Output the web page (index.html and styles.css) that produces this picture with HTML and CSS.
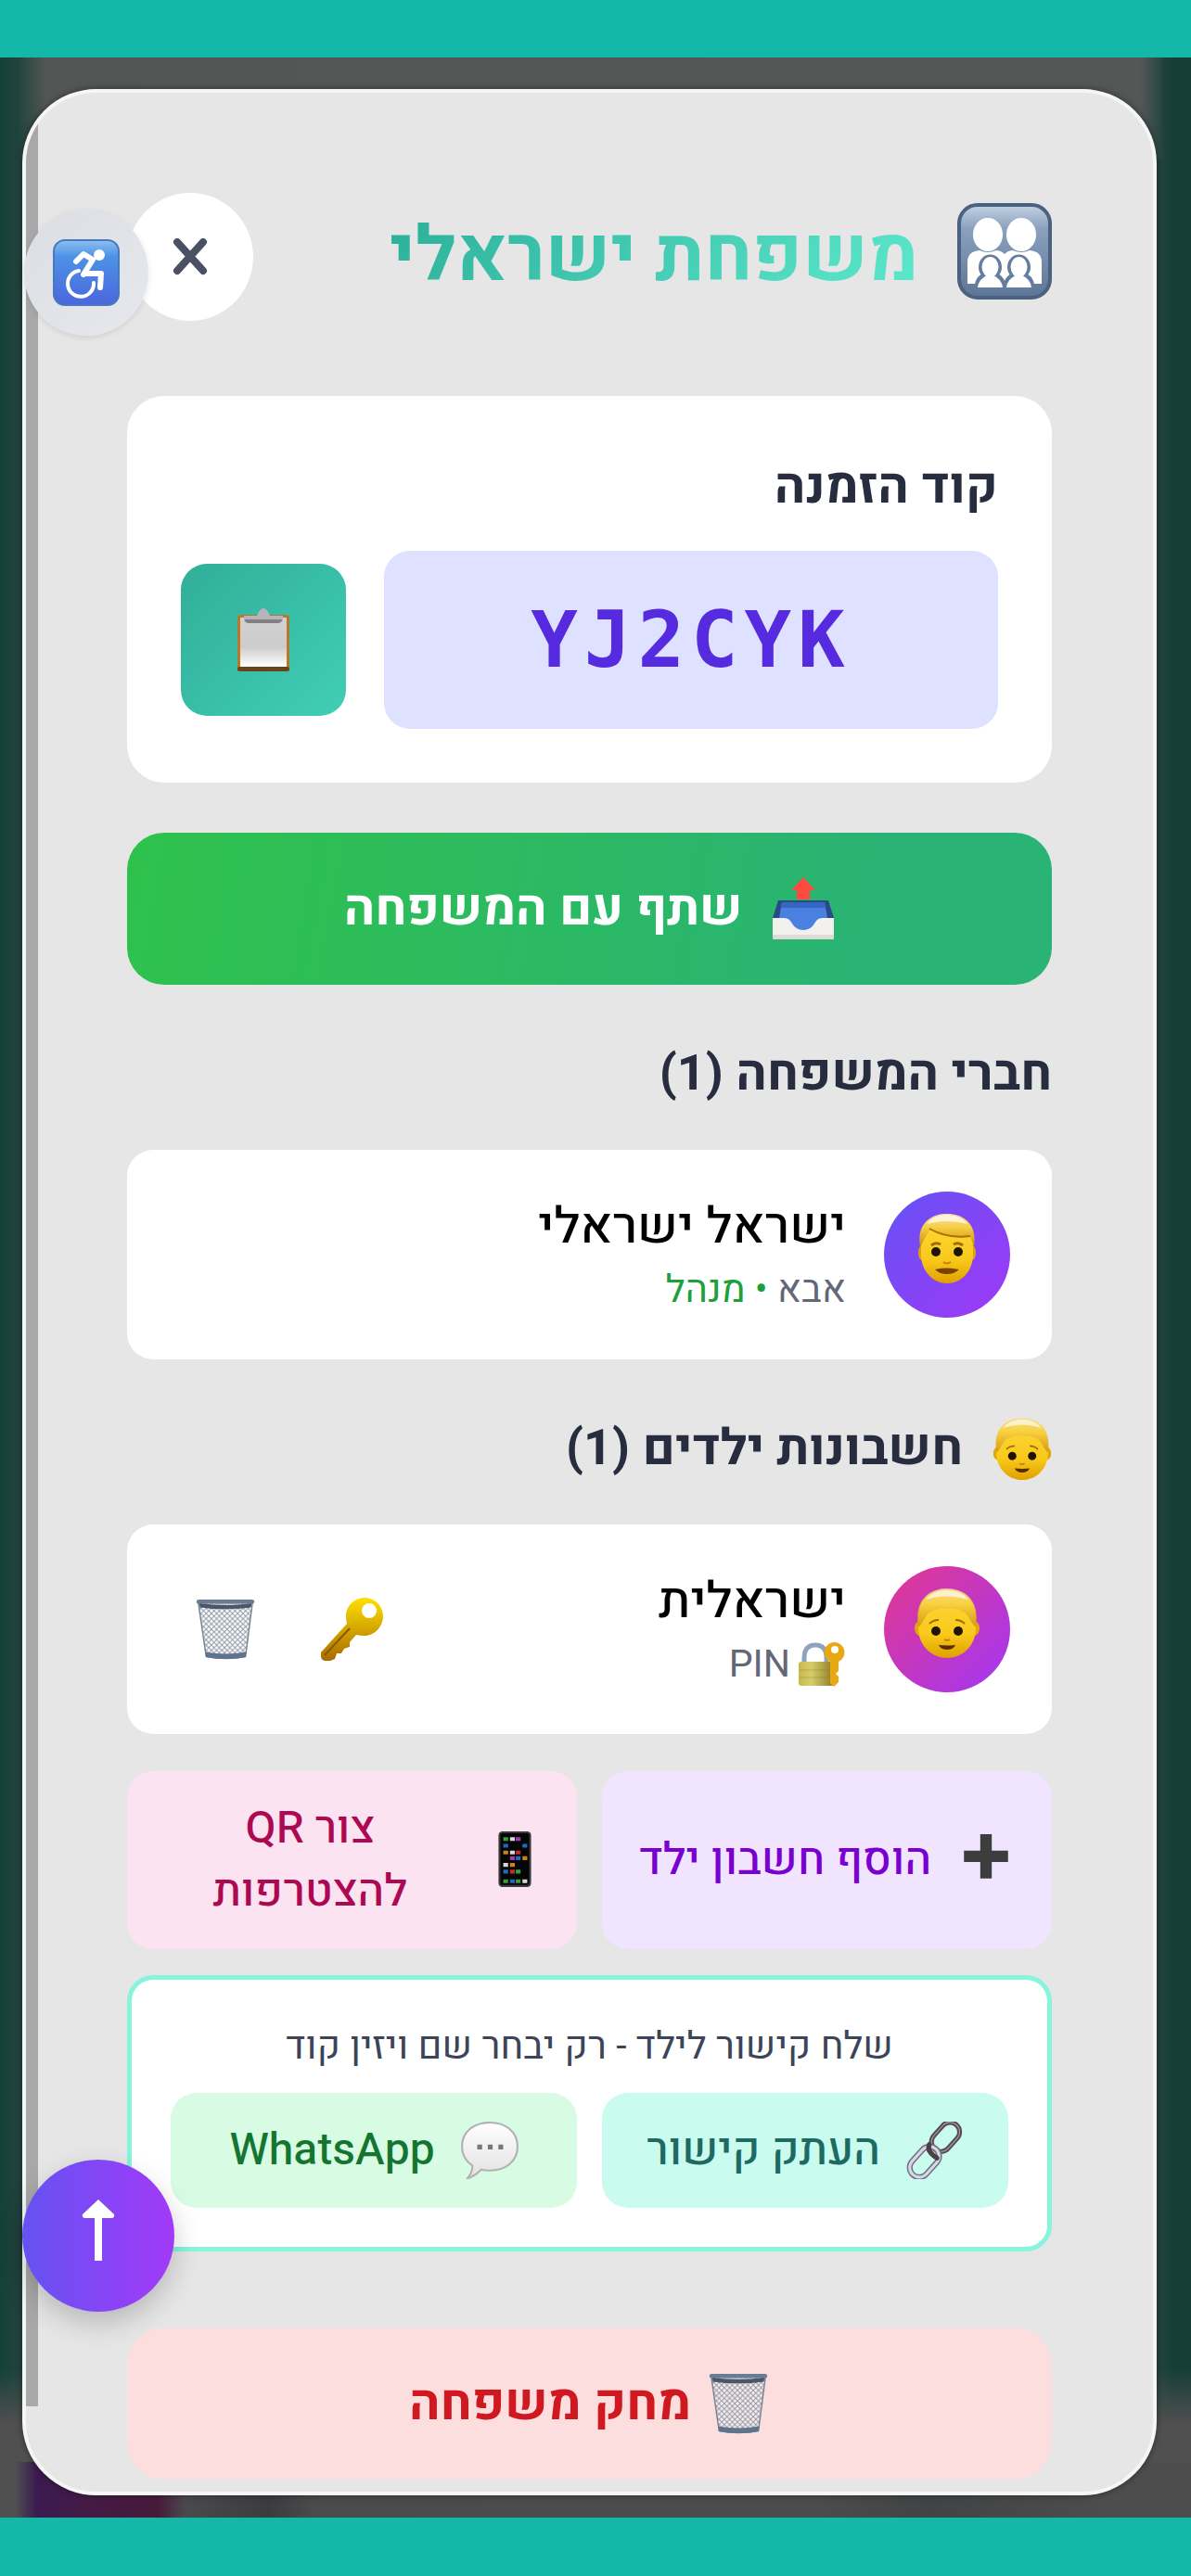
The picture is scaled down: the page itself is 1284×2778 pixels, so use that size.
FILE: index.html
```
<!DOCTYPE html>
<html lang="he" dir="rtl">
<head>
  <meta charset="utf-8">
  <meta name="viewport" content="width=device-width, initial-scale=1">
  <title>משפחת ישראלי</title>
  <link rel="stylesheet" href="styles.css">
</head>
<body>
  <!-- shared icons and gradients -->
  <svg class="sprite" aria-hidden="true">
    <defs>
      <linearGradient id="skin" x1="0" y1="0" x2="0" y2="1">
        <stop offset="0" stop-color="#ffd93a"/>
        <stop offset="0.65" stop-color="#f9c91c"/>
        <stop offset="1" stop-color="#e0a000"/>
      </linearGradient>
      <linearGradient id="hair" x1="0" y1="0" x2="0" y2="1">
        <stop offset="0" stop-color="#f3dfa0"/>
        <stop offset="0.4" stop-color="#f7cf45"/>
        <stop offset="1" stop-color="#c98a08"/>
      </linearGradient>
      <linearGradient id="gold" x1="0" y1="0" x2="0" y2="1">
        <stop offset="0" stop-color="#ffe100"/>
        <stop offset="1" stop-color="#a86a00"/>
      </linearGradient>
      <linearGradient id="brass" x1="0" y1="0" x2="1" y2="0">
        <stop offset="0" stop-color="#c9b94a"/>
        <stop offset="0.35" stop-color="#d8cd6c"/>
        <stop offset="1" stop-color="#8a7c28"/>
      </linearGradient>
      <linearGradient id="slate" x1="0" y1="0" x2="0" y2="1">
        <stop offset="0" stop-color="#c3d2e2"/>
        <stop offset="0.25" stop-color="#8ba2be"/>
        <stop offset="1" stop-color="#5c7596"/>
      </linearGradient>
      <linearGradient id="sky" x1="0" y1="0" x2="0" y2="1">
        <stop offset="0" stop-color="#8fc0f0"/>
        <stop offset="0.25" stop-color="#4d92e6"/>
        <stop offset="1" stop-color="#4a66dc"/>
      </linearGradient>
      <linearGradient id="paper" x1="0" y1="0" x2="0" y2="1">
        <stop offset="0" stop-color="#d2d2d2"/>
        <stop offset="0.6" stop-color="#cccccc"/>
        <stop offset="1" stop-color="#ffffff"/>
      </linearGradient>
      <linearGradient id="bubble" x1="0" y1="0" x2="0" y2="1">
        <stop offset="0" stop-color="#ffffff"/>
        <stop offset="1" stop-color="#e2e2e2"/>
      </linearGradient>
      <pattern id="mesh" width="6" height="6" patternUnits="userSpaceOnUse">
        <path d="M0 0l6 6M6 0L0 6" stroke="#8f9aa8" stroke-width="1.1"/>
      </pattern>
    </defs>
    <symbol id="trash" viewBox="0 0 68 72">
      <path d="M3 5h62l-8 62q-22 5-45 0z" fill="#ffffff" fill-opacity="0.45"/>
      <path d="M3 5h62l-8 62q-22 5-45 0z" fill="url(#mesh)" stroke="#76828f" stroke-width="1.5"/>
      <path d="M11 62q23 4 47 0l-1 6q-22 4-45 0z" fill="#5f738d"/>
      <path d="M4 6q30 5 60 0l-1 5q-29 4-58 0z" fill="#4a5768"/>
      <rect x="1" y="2" width="66" height="5" rx="2.5" fill="#6a7c94"/>
    </symbol>
    <symbol id="boy" viewBox="0 0 70 76">
      <ellipse cx="6" cy="43" rx="6" ry="8" fill="#e3a60c"/>
      <ellipse cx="64" cy="43" rx="6" ry="8" fill="#e3a60c"/>
      <path d="M4 33C4 12 16 1 35 1s31 11 31 32v10C66 61 52 75 35 75S4 61 4 43z" fill="url(#skin)"/>
      <path d="M4 42C-1 14 15 0 35 0s36 14 31 42c-5-4-6-11-12-16q-9-5-19-4-10-1-19 4c-6 5-7 12-12 16z" fill="url(#hair)" opacity="0.75"/>
      <path d="M12 12Q20 2 35 2t23 10Q35 5 12 12z" fill="#fbf0cf"/>
      <path d="M16 38q4-4 10-4M44 34q6 0 10 4" stroke="#a06a00" stroke-width="2" fill="none"/>
      <circle cx="23" cy="46" r="5" fill="#221500"/>
      <circle cx="47" cy="46" r="5" fill="#221500"/>
      <path d="M32 55q3 2 6 0" stroke="#c58300" stroke-width="2" fill="none"/>
      <path d="M26 61q9 1 18 0-2 5-9 5t-9-5z" fill="#5b2c00"/>
    </symbol>
  </svg>

  <div class="safe-area safe-top"></div>

  <main class="backdrop">
    <section class="modal" role="dialog" aria-labelledby="familyTitle">
      <div class="scroll-thumb"></div>

      <header class="modal-header">
        <div class="title-row">
          <svg class="family-icon" viewBox="0 0 102 104" aria-hidden="true">
            <rect x="2" y="2" width="98" height="100" rx="20" fill="url(#slate)" stroke="#4a6180" stroke-width="4"/>
            <g fill="#ffffff">
              <ellipse cx="33" cy="34" rx="16" ry="18"/>
              <ellipse cx="69" cy="34" rx="16" ry="18"/>
              <path d="M11 87V64q0-12 13-13 9 4 18 0 5 0 9 4 4-4 9-4 9 4 18 0 13 1 13 13v23z"/>
            </g>
            <!-- children in front, with a blue gap round them -->
            <g fill="#ffffff" stroke="#647d9e" stroke-width="9" stroke-linejoin="round">
              <path d="M23 90q1-9 10-12h5q9 3 10 12zM54 90q1-9 10-12h5q9 3 10 12z"/>
              <ellipse cx="35.500" cy="69" rx="8" ry="9"/>
              <ellipse cx="66.500" cy="69" rx="8" ry="9"/>
            </g>
            <g fill="#ffffff">
              <path d="M22 91q1-9 10-13h7q9 4 10 13zM53 91q1-9 10-13h7q9 4 10 13z"/>
              <ellipse cx="35.500" cy="69" rx="9" ry="11"/>
              <ellipse cx="66.500" cy="69" rx="9" ry="11"/>
              <circle cx="51" cy="78" r="3"/>
            </g>
          </svg>
          <h1 id="familyTitle">משפחת ישראלי</h1>
        </div>
        <button type="button" class="close-button" aria-label="סגור">
          <svg viewBox="0 0 40 40" aria-hidden="true"><path d="M6 4l28 31M34 4L6 35" stroke="#4a5163" stroke-width="8" stroke-linecap="round"/></svg>
        </button>
      </header>

      <div class="card invite">
        <h2>קוד הזמנה</h2>
        <div class="invite-row">
          <div class="invite-code" dir="ltr">YJ2CYK</div>
          <button type="button" class="copy-button" aria-label="העתק קוד">
            <svg viewBox="0 0 58 70" aria-hidden="true">
              <rect x="1" y="8" width="56" height="61" rx="4" fill="#b9772a"/>
              <rect x="1" y="64" width="56" height="5" rx="2" fill="#6b4318"/>
              <rect x="4" y="11" width="50" height="53" fill="url(#paper)"/>
              <path d="M8 9h14q3-8 7-8t7 8h14v5q-2 3-5 3H13q-4 0-5-3z" fill="#b4b4ba"/>
              <path d="M9 13h40q0 4-5 4H14q-5 0-5-4z" fill="#858080"/>
            </svg>
          </button>
        </div>
      </div>

      <button type="button" class="share-button">
        <svg viewBox="0 0 68 68" aria-hidden="true">
          <path d="M7 25h54l6 19v20H1V44z" fill="#2a4a86"/>
          <path d="M11 27h46l3 17q-9 1-12 7-6 8-14 8t-14-8q-3-6-12-7z" fill="#4a80e0"/>
          <path d="M11 27h46l1 6H10z" fill="#3566c2"/>
          <path d="M1 44h13q5 0 8 6 4 7 12 7t12-7q3-6 8-6h13v23H1z" fill="#f3f1ee"/>
          <path d="M1 62h66v5H1z" fill="#dedbd6"/>
          <path d="M34 0l13 14h-6v10H27V14h-6z" fill="#ff4b3e"/>
        </svg>
        <span>שתף עם המשפחה</span>
      </button>

      <h2 class="section-title">חברי המשפחה (1)</h2>
      <div class="card member">
        <div class="avatar avatar-parent">
          <svg viewBox="0 0 62 76" aria-hidden="true">
            <ellipse cx="4" cy="42" rx="4" ry="8" fill="#e0a20a"/>
            <ellipse cx="58" cy="42" rx="4" ry="8" fill="#e0a20a"/>
            <path d="M3 30C3 10 14 2 31 2s28 8 28 28v14c0 18-13 31-28 31S3 62 3 44z" fill="url(#skin)"/>
            <path d="M2 36C-2 12 12 0 31 0s33 12 29 36l-4-12c-14 2-28 0-42-8-5 6-8 12-12 20z" fill="url(#hair)"/>
            <path d="M12 16c14 8 28 10 44 8" stroke="#a86f05" stroke-width="2" fill="none"/>
            <path d="M9 11Q17 1 31 1t22 10q-22-6-44 0z" fill="#fdf3d6"/>
            <path d="M14 34q5-4 10-1M38 33q5-3 10 1" stroke="#a06a00" stroke-width="3" fill="none"/>
            <circle cx="19" cy="41" r="5" fill="#221500"/>
            <circle cx="43" cy="41" r="5" fill="#221500"/>
            <path d="M27 52q4 3 8 0" stroke="#c58300" stroke-width="2" fill="none"/>
            <path d="M18 60q13-3 26 0-5 5-13 5t-13-5z" fill="#7a4300"/>
          </svg>
        </div>
        <div class="member-info">
          <p class="member-name">ישראל ישראלי</p>
          <p class="member-role">אבא <span class="admin">• מנהל</span></p>
        </div>
      </div>

      <h2 class="section-title">
        <svg viewBox="0 0 70 76" aria-hidden="true"><use href="#boy"/></svg>
        <span>חשבונות ילדים (1)</span>
      </h2>
      <div class="card member">
        <div class="avatar avatar-child">
          <svg viewBox="0 0 70 76" aria-hidden="true"><use href="#boy"/></svg>
        </div>
        <div class="member-info">
          <p class="member-name">ישראלית</p>
          <p class="member-role with-pin">
            <svg viewBox="0 0 52 50" aria-hidden="true">
              <path d="M7 24V18Q7 4 19 4t12 14v6" fill="none" stroke="#8fa3bf" stroke-width="5"/>
              <rect x="1" y="22" width="38" height="26" rx="3" fill="url(#brass)"/>
              <path d="M2 31h36M2 39h36" stroke="#8a7c28" stroke-opacity="0.4"/>
              <path d="M40 1a11 11 0 0 1 4 21v10l-3 3 3 3v6l-5 5-4-4V22A11 11 0 0 1 40 1z" fill="#e8a812"/>
              <circle cx="40" cy="9" r="4" fill="#ffffff"/>
            </svg>
            <span>PIN</span>
          </p>
        </div>
        <div class="member-actions">
          <button type="button" aria-label="שנה קוד">
            <svg viewBox="0 0 68 68" aria-hidden="true">
              <path d="M48 0C59 0 68 9 68 20S59 41 48 41q-6 0-9-1l-7 8v5l-6 2-3 5h-5l-2 6-5 2H5q-4-1-4-5v-4l28-31q-1-4-1-8C28 9 37 0 48 0zM53 6a8 8 0 1 0 0 16 8 8 0 0 0 0-16z" fill="url(#gold)" fill-rule="evenodd"/>
              <path d="M5 62l27-29" stroke="#8a5600" stroke-width="2"/>
            </svg>
          </button>
          <button type="button" aria-label="מחק חשבון">
            <svg viewBox="0 0 68 72" aria-hidden="true"><use href="#trash"/></svg>
          </button>
        </div>
      </div>

      <div class="action-row">
        <button type="button" class="action add-child">
          <svg viewBox="0 0 60 60" aria-hidden="true"><path d="M24 3h12v17h17v12H36v17H24V32H7V20h17z" fill="#3d3d3d"/></svg>
          <span>הוסף חשבון ילד</span>
        </button>
        <button type="button" class="action create-qr">
          <svg viewBox="0 0 60 60" aria-hidden="true">
            <rect x="13" y="0" width="34" height="58" rx="4" fill="#3b3b3b"/>
            <rect x="15" y="2" width="30" height="54" rx="2" fill="#050505"/>
            <path d="M18 6h5v4h-5zM31 40h5v4h-5zM18 50h5v4h-5zM31 50h5v4h-5z" fill="#2fa33a"/>
            <path d="M18 13h5v4h-5zM38 13h5v4h-5zM31 26h5v4h-5zM18 40h5v4h-5zM25 50h5v4h-5z" fill="#2368c4"/>
            <path d="M18 20h5v4h-5zM38 26h5v4h-5zM25 33h5v4h-5z" fill="#c98516"/>
            <path d="M31 20h5v4h-5zM25 40h5v4h-5z" fill="#c42b2b"/>
            <path d="M25 6h5v4h-5zM25 20h5v4h-5zM18 33h5v4h-5zM38 50h5v4h-5z" fill="#d8d8d8"/>
            <path d="M31 6h5v4h-5zM25 26h5v4h-5z" fill="#9c3bb5"/>
          </svg>
          <span>צור QR להצטרפות</span>
        </button>
      </div>

      <div class="card child-link">
        <p>שלח קישור לילד - רק יבחר שם ויזין קוד</p>
        <div class="action-row">
          <button type="button" class="action copy-link">
            <svg viewBox="0 0 60 60" aria-hidden="true">
              <g fill="none">
                <rect x="31" y="-1" width="20" height="34" rx="10" transform="rotate(42 41 16)" stroke="#5a4c50" stroke-width="5"/>
                <rect x="31" y="-1" width="20" height="34" rx="10" transform="rotate(42 41 16)" stroke="#a9a6b8" stroke-width="1"/>
                <rect x="9" y="24" width="20" height="36" rx="10" transform="rotate(42 19 42)" stroke="#77707a" stroke-width="6"/>
                <rect x="9" y="24" width="20" height="36" rx="10" transform="rotate(42 19 42)" stroke="#d3d8ea" stroke-width="3"/>
                <path d="M24 24q-3 7 8 14" stroke="#4d4145" stroke-width="5" stroke-linecap="round"/>
              </g>
            </svg>
            <span>העתק קישור</span>
          </button>
          <button type="button" class="action whatsapp">
            <svg viewBox="0 0 60 60" aria-hidden="true">
              <path d="M30 1C46 1 59 10 59 26S46 51 30 51q-5 0-9-1-6 7-14 9 5-6 5-13Q1 39 1 26C1 10 14 1 30 1z" fill="url(#bubble)" stroke="#b1b1b1" stroke-width="2"/>
              <path d="M17 24h5v5h-5zM28 24h5v5h-5zM39 24h5v5h-5z" fill="#777777"/>
            </svg>
            <span>WhatsApp</span>
          </button>
        </div>
      </div>

      <button type="button" class="delete-button">
        <svg viewBox="0 0 68 72" aria-hidden="true"><use href="#trash"/></svg>
        <span>מחק משפחה</span>
      </button>
    </section>
  </main>

  <div class="safe-area safe-bottom"></div>

  <button type="button" class="accessibility-button" aria-label="נגישות">
    <svg viewBox="0 0 72 72" aria-hidden="true">
      <rect x="1" y="1" width="70" height="70" rx="12" fill="url(#sky)" stroke="#4579c0" stroke-width="2"/>
      <circle cx="50" cy="17" r="6" fill="#ffffff"/>
      <g fill="none" stroke="#ffffff" stroke-linecap="round" stroke-linejoin="round">
        <path d="M25 24l8-8 10 6-10 16" stroke-width="6"/>
        <path d="M35 37h17l-1 15" stroke-width="6"/>
        <path d="M44 47a14 14 0 1 1-16-13" stroke-width="4"/>
      </g>
    </svg>
  </button>
  <button type="button" class="scroll-top" aria-label="חזרה למעלה">
    <svg viewBox="0 0 36 66" aria-hidden="true"><path d="M18 0l17 16q1 4-3 4H22v46h-8V20H4q-4 0-3-4z" fill="#ffffff"/></svg>
  </button>
</body>
</html>
```
FILE: styles.css
```
* {
  box-sizing: border-box;
  margin: 0;
  padding: 0;
}

body {
  min-height: 100vh;
  display: flex;
  flex-direction: column;
  font-family: Heebo, "Open Sans", "Liberation Sans", sans-serif;
  font-size: 48px;
  line-height: 1.5;
  color: #272c3f;
  background-color: #14b8a9;
}

button {
  border: 0;
  font-family: inherit;
  cursor: pointer;
}

svg {
  display: block;
  flex-shrink: 0;
}

.sprite {
  position: absolute;
  width: 0;
  height: 0;
}

.safe-area {
  background-color: #14b8a9;
}

.safe-top {
  height: 62px;
}

.safe-bottom {
  height: 63px;
}

/* dimmed page behind the modal */
.backdrop {
  flex: 1;
  padding: 34px 37px 24px 24px;
  background:
    linear-gradient(90deg, rgba(77, 77, 77, 0) 16px, #3b1a52 40px, #431b45 90px, #48193a 170px, #4a4a4d 200px, #3c3c3f 290px, #4b4b4d 340px, #4c4c4c 880px, #414345 1000px, #4d4d4d 1200px) bottom / 100% 60px no-repeat,
    linear-gradient(180deg, rgba(80, 80, 80, 0), #505050 60px) bottom / 100% 160px no-repeat,
    linear-gradient(90deg, rgba(83, 87, 86, 0) 20px, #535655 50px, #535756 1230px, rgba(83, 87, 86, 0) 1255px) top / 100% 110px no-repeat,
    linear-gradient(90deg, #15403a, #22443d 24px, #22443d 1250px, #163e38 1264px);
}

.modal {
  position: relative;
  overflow: hidden;
  padding: 108px 109px 13px;
  border: 4px solid #f6f6f6;
  border-radius: 80px;
  background-color: #e6e6e6;
  box-shadow: 0 0 6px 1px rgba(0, 0, 0, 0.35);
}

.scroll-thumb {
  position: absolute;
  left: 0;
  top: 0;
  bottom: 92px;
  width: 13px;
  background-color: #a8a8a8;
}

.modal-header,
.invite-row,
.section-title,
.member,
.member-actions,
.action-row {
  display: flex;
  align-items: center;
}

.modal-header {
  justify-content: space-between;
  margin-bottom: 81px;
}

.title-row {
  display: flex;
  align-items: flex-start;
  gap: 42px;
}

.family-icon {
  width: 102px;
  height: 104px;
}

h1 {
  font-size: 82px;
  font-weight: 700;
  line-height: 116px;
  color: transparent;
  background: linear-gradient(135deg, #2bae98, #5eeacf);
  -webkit-background-clip: text;
  background-clip: text;
}

h2 {
  font-size: 54px;
  font-weight: 700;
  line-height: 81px;
}

.close-button {
  display: grid;
  place-items: center;
  width: 136px;
  height: 138px;
  border-radius: 50%;
  background-color: #ffffff;
}

.close-button svg {
  width: 40px;
  height: 40px;
}

.card {
  border-radius: 28px;
  background-color: #ffffff;
}

.invite {
  padding: 58px;
  margin-bottom: 54px;
  border-radius: 40px;
}

.invite h2 {
  margin-bottom: 28px;
}

.invite-row {
  gap: 41px;
}

.invite-code {
  flex: 1;
  padding: 32px;
  border-radius: 28px;
  background-color: #dee1ff;
  font-family: "DejaVu Sans Mono", "Liberation Mono", monospace;
  font-size: 84px;
  font-weight: 700;
  line-height: 128px;
  letter-spacing: 7px;
  text-align: center;
  color: #562be0;
}

.copy-button {
  display: grid;
  place-items: center;
  width: 178px;
  height: 164px;
  border-radius: 28px;
  background: linear-gradient(135deg, #30ae98, #41ceb5);
}

.copy-button svg {
  width: 58px;
  height: 70px;
}

.share-button,
.delete-button {
  display: flex;
  align-items: center;
  justify-content: center;
  width: 100%;
  height: 164px;
  border-radius: 40px;
  font-size: 54px;
  font-weight: 700;
}

.share-button {
  gap: 32px;
  color: #ffffff;
  background: linear-gradient(100deg, #2ec24c, #29b374 80%);
}

.share-button svg,
.member-actions svg,
.delete-button svg {
  width: 68px;
  height: 68px;
}

.section-title {
  gap: 32px;
  margin: 56px 0 41px;
}

.section-title svg {
  width: 64px;
  height: 68px;
}

.member {
  gap: 41px;
  padding: 45px;
}

.avatar {
  display: grid;
  place-items: center;
  width: 136px;
  height: 136px;
  padding-bottom: 12px;
  border-radius: 50%;
}

.avatar svg {
  height: 76px;
}

.avatar-parent {
  background: linear-gradient(135deg, #6552f6, #a038f6);
}

.avatar-child {
  background: linear-gradient(135deg, #e4378f, #a137f5);
}

.member-info {
  flex: 1;
}

.member-name {
  font-size: 54px;
  font-weight: 500;
  line-height: 76px;
  color: #000000;
}

.member-role {
  font-size: 41px;
  line-height: 60px;
  color: #626878;
}

.admin {
  color: #1ca03c;
}

.with-pin {
  display: flex;
  align-items: center;
  gap: 8px;
}

.with-pin svg {
  width: 52px;
  height: 50px;
}

.member-actions {
  gap: 14px;
}

.member-actions button {
  display: grid;
  place-items: center;
  width: 122px;
  height: 122px;
  background: none;
}

.action-row {
  align-items: stretch;
  gap: 27px;
  margin: 40px 0 28px;
}

.action {
  flex: 1 1 0;
  display: flex;
  align-items: center;
  justify-content: center;
  gap: 28px;
  padding: 28px 36px;
  border-radius: 28px;
  font-size: 48px;
  font-weight: 500;
  line-height: 68px;
}

.action svg {
  width: 62px;
  height: 62px;
}

.add-child {
  color: #7a00d0;
  background-color: #f1e4ff;
}

.create-qr {
  color: #ad0852;
  background-color: #fbe3f2;
}

.child-link {
  padding: 42px;
  margin-bottom: 82px;
  border: 5px solid #87f5dd;
  text-align: center;
}

.child-link p {
  font-size: 41px;
  line-height: 60px;
  color: #3b4458;
}

.child-link .action-row {
  margin: 20px 0 0;
}

.copy-link {
  color: #1d6a62;
  background-color: #c9fbee;
}

.whatsapp {
  color: #13752f;
  background-color: #d8fbe3;
}

.delete-button {
  gap: 17px;
  color: #cf1820;
  background-color: #fcdede;
}

/* floating buttons */
.accessibility-button,
.scroll-top {
  position: fixed;
  display: grid;
  place-items: center;
  border-radius: 50%;
}

.accessibility-button {
  top: 226px;
  left: 26px;
  width: 134px;
  height: 136px;
  background: linear-gradient(135deg, #dcdee4, #e6e8ee);
  box-shadow: 0 2px 6px rgba(0, 0, 0, 0.1);
}

.accessibility-button svg {
  width: 72px;
  height: 72px;
}

.scroll-top {
  bottom: 285px;
  left: 24px;
  width: 164px;
  height: 164px;
  padding-bottom: 12px;
  background: linear-gradient(90deg, #6552f3, #a23af8);
  box-shadow: 0 12px 30px rgba(0, 0, 0, 0.2);
}

.scroll-top svg {
  width: 36px;
  height: 66px;
}
```
